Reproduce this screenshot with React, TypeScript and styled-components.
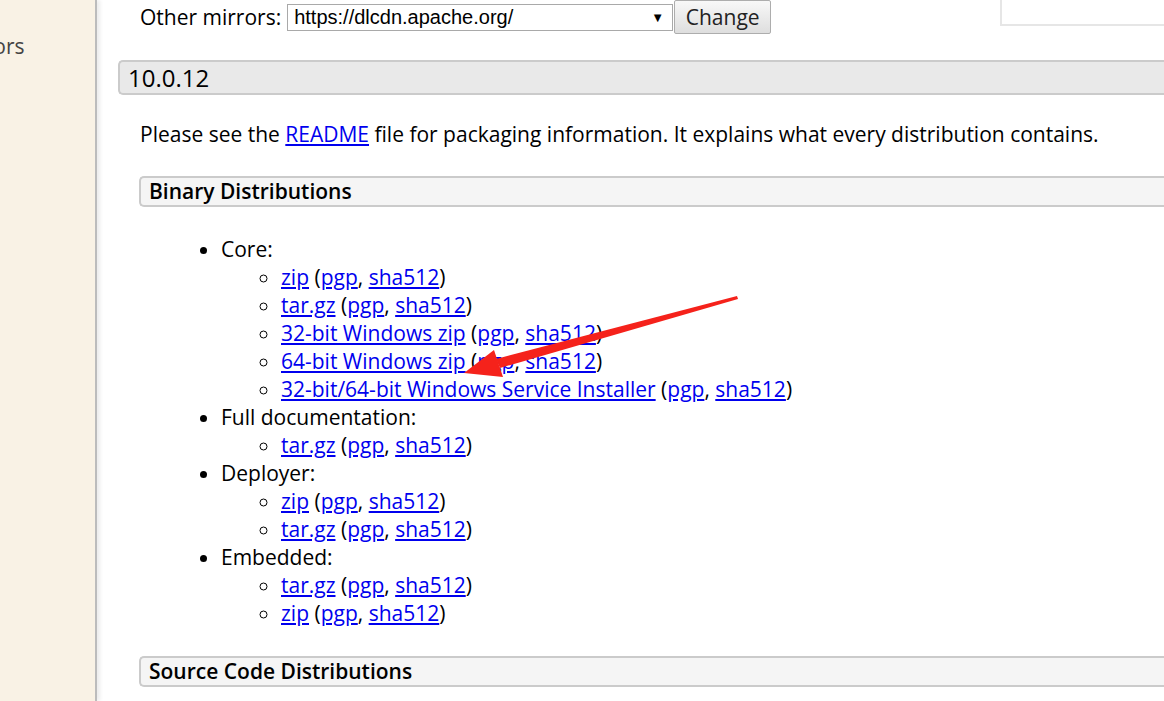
import React from 'react';
import { styled, createGlobalStyle } from 'styled-components';

const GlobalStyle = createGlobalStyle`
  html, body {
    margin: 0;
    padding: 0;
    background: #fff;
    overflow: hidden;
  }
  body {
    font-family: 'Open Sans', 'Liberation Sans', sans-serif;
    color: #000;
  }
`;

const Page = styled.div`
  display: flex;
  width: 1164px;
  height: 701px;
  position: relative;
  overflow: hidden;
`;

const Sidebar = styled.nav`
  width: 95px;
  flex: none;
  background: #f9f2e5;
  border-right: 2px solid #bcbcbc;
  overflow: hidden;
  box-shadow: 3px 0 4px rgba(0, 0, 0, 0.08);
`;

const SideLink = styled.div`
  margin: 32px 0 0 -48px;
  font-size: 21px;
  line-height: 28px;
  color: #444;
  white-space: nowrap;
`;

const Main = styled.main`
  flex: 1;
  padding-left: 21px;
  min-width: 0;
`;

const MirrorRow = styled.form`
  display: flex;
  align-items: center;
  height: 34px;
  padding-left: 22px;
  font-size: 21px;
`;

const MirrorLabel = styled.span`
  margin-right: 6px;
  line-height: 28px;
`;

const SelectBox = styled.div`
  display: flex;
  align-items: center;
  justify-content: space-between;
  box-sizing: border-box;
  width: 386px;
  height: 27px;
  padding: 0 8px 0 6px;
  border: 1px solid #a9a9a9;
  background: #fff;
  font-family: 'Liberation Sans', Arial, sans-serif;
  font-size: 20px;
`;

const Caret = styled.span`
  font-size: 13px;
`;

const Button = styled.button`
  box-sizing: border-box;
  height: 34px;
  width: 97px;
  margin-left: 1px;
  border: 1px solid #adadad;
  border-radius: 2px;
  background: linear-gradient(#f8f8f8, #dedede);
  font-family: 'Open Sans', sans-serif;
  font-size: 21px;
  color: #222;
  padding: 0;
`;

const SearchBox = styled.div`
  margin-left: auto;
  align-self: flex-start;
  width: 164px;
  height: 26px;
  box-sizing: border-box;
  border-left: 2px solid #e6e6e6;
  border-bottom: 2px solid #e6e6e6;
`;

const VersionHeader = styled.h3`
  box-sizing: border-box;
  margin: 26px 0 0 0;
  border: 2px solid #cbcbcb;
  border-right: none;
  border-radius: 5px 0 0 5px;
  background: #e9e9e9;
  height: 35px;
  padding-left: 8px;
  font-size: 24px;
  font-weight: 500;
  line-height: 31px;
`;

const Section = styled.div`
  padding-left: 22px;
`;

const Para = styled.p`
  margin: 25px 0 28px 0;
  font-size: 21px;
  line-height: 28px;
`;

const SubHeader = styled.h4<{ $gap?: number }>`
  box-sizing: border-box;
  margin: ${(p) => p.$gap ?? 0}px 0 0 -1px;
  border: 2px solid #cbcbcb;
  border-right: none;
  border-radius: 5px 0 0 5px;
  background: #f5f5f5;
  height: 31px;
  padding-left: 8px;
  font-size: 21px;
  font-weight: 600;
  line-height: 27px;
`;

const List = styled.ul`
  margin: 28px 0 0 0;
  padding-left: 81px;
  font-size: 21px;
  line-height: 28px;
  list-style: disc;
`;

const SubList = styled.ul`
  margin: 0;
  padding-left: 60px;
  list-style: circle;
`;

const Link = styled.a`
  color: #0000ee;
  text-decoration: underline;
  text-underline-offset: 2px;
`;

const Arrow = styled.svg`
  position: absolute;
  left: 0;
  top: 0;
  pointer-events: none;
`;

type Item = { label: string };
type Group = { title: string; items: Item[] };

const groups: Group[] = [
  {
    title: 'Core:',
    items: [
      { label: 'zip' },
      { label: 'tar.gz' },
      { label: '32-bit Windows zip' },
      { label: '64-bit Windows zip' },
      { label: '32-bit/64-bit Windows Service Installer' },
    ],
  },
  { title: 'Full documentation:', items: [{ label: 'tar.gz' }] },
  { title: 'Deployer:', items: [{ label: 'zip' }, { label: 'tar.gz' }] },
  { title: 'Embedded:', items: [{ label: 'tar.gz' }, { label: 'zip' }] },
];

const Download = ({ label }: Item) => (
  <li>
    <Link href="#">{label}</Link> (<Link href="#">pgp</Link>, <Link href="#">sha512</Link>)
  </li>
);

export default function App() {
  return (
    <>
      <GlobalStyle />
      <Page>
        <Sidebar>
          <SideLink>Mirrors</SideLink>
        </Sidebar>
        <Main>
          <MirrorRow>
            <MirrorLabel>Other mirrors:</MirrorLabel>
            <SelectBox>
              <span>https://dlcdn.apache.org/</span>
              <Caret>▼</Caret>
            </SelectBox>
            <Button type="button">Change</Button>
            <SearchBox />
          </MirrorRow>

          <VersionHeader>10.0.12</VersionHeader>
          <Section>
            <Para>
              Please see the <Link href="#">README</Link> file for packaging information. It explains
              what every distribution contains.
            </Para>
            <SubHeader>Binary Distributions</SubHeader>
            <List>
              {groups.map((g) => (
                <li key={g.title}>
                  {g.title}
                  <SubList>
                    {g.items.map((it, i) => (
                      <Download key={i} label={it.label} />
                    ))}
                  </SubList>
                </li>
              ))}
            </List>
            <SubHeader $gap={29}>Source Code Distributions</SubHeader>
          </Section>
        </Main>

        {/* red annotation arrow pointing at the 64-bit zip link */}
        <Arrow width="1164" height="701" viewBox="0 0 1164 701">
          <polygon points="737,296 738,299 500,368 496,359" fill="#f5221b" />
          <polygon points="464,373 494,350 503,377" fill="#f5221b" />
        </Arrow>
      </Page>
    </>
  );
}
